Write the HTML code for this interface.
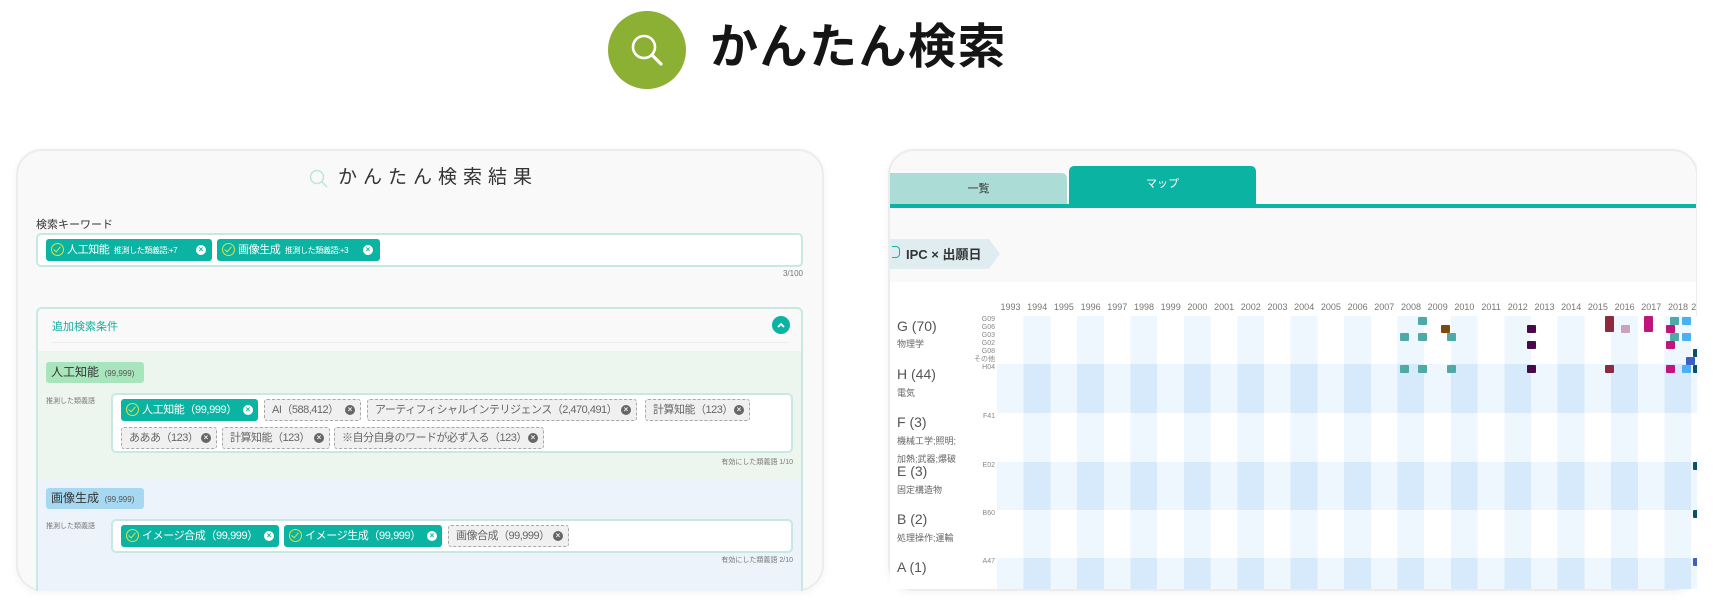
<!DOCTYPE html>
<html><head><meta charset="utf-8"><style>
*{margin:0;padding:0;box-sizing:border-box}
body{width:1715px;height:607px;background:#fff;position:relative;overflow:hidden;font-family:"Liberation Sans","Noto Sans CJK JP",sans-serif;color:#333}
.a{position:absolute}
.card{position:absolute;background:#f9f9f9;border:2px solid #ececec;border-radius:26px;overflow:hidden;box-shadow:0 2px 8px rgba(0,0,0,.05)}
.chip{position:absolute;height:22px;background:#0bb3a2;border-radius:3px;color:#fff;font-size:11px;letter-spacing:-0.4px;line-height:22px;white-space:nowrap;padding-left:21px;overflow:hidden}
.chip .ck{position:absolute;left:5px;top:4px;width:13px;height:13px;border:1.6px solid #d8e34a;border-radius:50%}
.chip .ck:after{content:"";position:absolute;left:3px;top:1px;width:3px;height:6px;border:solid #d8e34a;border-width:0 1.6px 1.6px 0;transform:rotate(40deg)}
.xw{position:absolute;top:6px;width:10px;height:10px;border-radius:50%;background:#fff;color:#0bb3a2;font-size:8px;line-height:10px;text-align:center;font-weight:bold;letter-spacing:0}
.dchip{position:absolute;height:22px;background:#f0f0f0;border:1px dashed #a8a8a8;border-radius:3px;color:#666;font-size:11px;letter-spacing:-0.5px;line-height:20px;white-space:nowrap;padding-left:7px;overflow:hidden}
.xg{position:absolute;top:5px;width:10px;height:10px;border-radius:50%;background:#666;color:#f0f0f0;font-size:8px;line-height:10px;text-align:center;font-weight:bold;letter-spacing:0}
.sm{font-size:8px;color:#777}
.yr{position:absolute;top:302px;font-size:9px;color:#777;width:27px;text-align:center}
.row{position:absolute;left:997px;width:700px}
.lt{background:repeating-linear-gradient(90deg,#fff 0 26.7px,#eef6fe 26.7px 53.4px)}
.dk{background:repeating-linear-gradient(90deg,#eef6fe 0 26.7px,#d6eafb 26.7px 53.4px)}
.sq{position:absolute;width:9px;height:8px;border-radius:1px}
.gl{position:absolute;left:897px;font-size:14px;color:#555}
.gs{position:absolute;left:897px;font-size:9px;color:#666}
.cd{position:absolute;right:720px;font-size:7px;color:#888;line-height:8px;text-align:right}
</style></head><body>

<!-- header -->
<div class="a" style="left:608px;top:11px;width:78px;height:78px;border-radius:50%;background:#8cb033"></div>
<svg class="a" style="left:626px;top:29px" width="44" height="44" viewBox="0 0 44 44"><circle cx="18" cy="18" r="11" fill="none" stroke="#fff" stroke-width="2.6"/><path d="M26 26 L35 35" stroke="#fff" stroke-width="3.2" stroke-linecap="round"/></svg>
<div class="a" style="left:710px;top:13px;font-size:48px;font-weight:bold;color:#151515;line-height:70px;letter-spacing:1.5px">かんたん検索</div>

<!-- left card -->
<div class="card" style="left:16px;top:149px;width:808px;height:442px"></div>
<svg class="a" style="left:308px;top:168px" width="22" height="22" viewBox="0 0 22 22"><circle cx="9" cy="9" r="6.5" fill="none" stroke="#bfe3dd" stroke-width="1.5"/><path d="M14 14 L19 19" stroke="#bfe3dd" stroke-width="1.5"/></svg>
<div class="a" style="left:338px;top:166px;font-size:19px;color:#333;letter-spacing:6px;line-height:24px">かんたん検索結果</div>
<div class="a" style="left:36px;top:216px;font-size:11px;color:#333">検索キーワード</div>
<div class="a" style="left:36px;top:233px;width:767px;height:34px;background:#fff;border:2px solid #c8e8e3;border-radius:5px"></div>
<div class="chip" style="left:46px;top:239px;width:166px"><span class="ck"></span>人工知能 <span style="font-size:8px">&nbsp;推測した類義語:+7</span><span class="xw" style="left:150px">×</span></div>
<div class="chip" style="left:217px;top:239px;width:163px"><span class="ck"></span>画像生成 <span style="font-size:8px">&nbsp;推測した類義語:+3</span><span class="xw" style="left:146px">×</span></div>
<div class="a sm" style="left:760px;top:269px;width:43px;text-align:right">3/100</div>

<div class="a" style="left:36px;top:307px;width:767px;height:284px;border:2px solid #c8e8e3;border-bottom:none;border-radius:6px 6px 0 0;background:#f9f9f9;overflow:hidden">
  <div class="a" style="left:14px;top:9px;font-size:11px;color:#19ad9e">追加検索条件</div>
  <div class="a" style="left:734px;top:7px;width:18px;height:18px;border-radius:50%;background:#0bb3a2"></div>
  <svg class="a" style="left:738px;top:11px" width="10" height="10" viewBox="0 0 10 10"><path d="M2 7 L5 4 L8 7" fill="none" stroke="#fff" stroke-width="1.8"/></svg>
  <div class="a" style="left:14px;top:33px;width:737px;height:1px;background:#eee"></div>
  <div class="a" style="left:0;top:42px;width:767px;height:128px;background:#edf6ee"></div>
  <div class="a" style="left:0;top:170px;width:767px;height:140px;background:#ecf3fa"></div>
</div>
<!-- section 1 -->
<div class="a" style="left:46px;top:362px;width:98px;height:21px;background:#a8e5bc;border-radius:3px;font-size:12px;line-height:21px;padding-left:5px;color:#333">人工知能 <span style="font-size:8px;color:#555">&nbsp;(99,999)</span></div>
<div class="a sm" style="left:46px;top:396px;font-size:7px">推測した類義語</div>
<div class="a" style="left:111px;top:393px;width:682px;height:60px;background:#fff;border:2px solid #c8e8e3;border-radius:5px"></div>
<div class="chip" style="left:121px;top:399px;width:137px"><span class="ck"></span>人工知能（99,999）<span class="xw" style="left:122px">×</span></div>
<div class="dchip" style="left:264px;top:399px;width:97px">AI（588,412）<span class="xg" style="left:80px">×</span></div>
<div class="dchip" style="left:367px;top:399px;width:270px">アーティフィシャルインテリジェンス（2,470,491）<span class="xg" style="left:253px">×</span></div>
<div class="dchip" style="left:645px;top:399px;width:105px">計算知能（123）<span class="xg" style="left:88px">×</span></div>
<div class="dchip" style="left:121px;top:427px;width:96px">あああ（123）<span class="xg" style="left:79px">×</span></div>
<div class="dchip" style="left:222px;top:427px;width:108px">計算知能（123）<span class="xg" style="left:91px">×</span></div>
<div class="dchip" style="left:334px;top:427px;width:210px">※自分自身のワードが必ず入る（123）<span class="xg" style="left:193px">×</span></div>
<div class="a sm" style="left:600px;top:457px;width:193px;text-align:right;font-size:7px">有効にした類義語 1/10</div>
<!-- section 2 -->
<div class="a" style="left:46px;top:488px;width:98px;height:21px;background:#a6d8f2;border-radius:3px;font-size:12px;line-height:21px;padding-left:5px;color:#333">画像生成 <span style="font-size:8px;color:#555">&nbsp;(99,999)</span></div>
<div class="a sm" style="left:46px;top:521px;font-size:7px">推測した類義語</div>
<div class="a" style="left:111px;top:519px;width:682px;height:34px;background:#fff;border:2px solid #c8e8e3;border-radius:5px"></div>
<div class="chip" style="left:121px;top:525px;width:158px"><span class="ck"></span>イメージ合成（99,999）<span class="xw" style="left:143px">×</span></div>
<div class="chip" style="left:284px;top:525px;width:158px"><span class="ck"></span>イメージ生成（99,999）<span class="xw" style="left:143px">×</span></div>
<div class="dchip" style="left:448px;top:525px;width:121px">画像合成（99,999）<span class="xg" style="left:104px">×</span></div>
<div class="a sm" style="left:600px;top:555px;width:193px;text-align:right;font-size:7px">有効にした類義語 2/10</div>

<!-- right card -->
<div class="card" style="left:888px;top:149px;width:810px;height:442px"></div>
<div class="a" style="left:890px;top:173px;width:177px;height:32px;background:#acdcd6;border-radius:0 5px 0 0;font-size:11px;text-align:center;line-height:32px;color:#333">一覧</div>
<div class="a" style="left:1069px;top:166px;width:187px;height:39px;background:#0bb3a2;border-radius:5px 5px 0 0;font-size:11px;text-align:center;line-height:36px;color:#fff">マップ</div>
<div class="a" style="left:890px;top:204px;width:806px;height:4px;background:#0bb3a2"></div>
<div class="a" style="left:890px;top:239px;width:110px;height:30px;background:#dfedf0;clip-path:polygon(0 0,90% 0,100% 50%,90% 100%,0 100%)"></div>
<div class="a" style="left:892px;top:246px;width:8px;height:12px;border:1.5px solid #19ad9e;border-radius:0 4px 4px 0;border-left:none"></div>
<div class="a" style="left:906px;top:244px;font-size:13px;font-weight:bold;color:#333">IPC × 出願日</div>
<div class="a" style="left:890px;top:282px;width:806px;height:307px;background:#fff"></div>

<!-- rows -->
<div class="row lt" style="top:316px;height:48px"></div>
<div class="row dk" style="top:364px;height:49px"></div>
<div class="row lt" style="top:413px;height:49px"></div>
<div class="row dk" style="top:462px;height:48px"></div>
<div class="row lt" style="top:510px;height:48px"></div>
<div class="row dk" style="top:558px;height:31px"></div>

<div class="yr" style="left:997px">1993</div><div class="yr" style="left:1023.7px">1994</div><div class="yr" style="left:1050.4px">1995</div><div class="yr" style="left:1077.1px">1996</div><div class="yr" style="left:1103.8px">1997</div><div class="yr" style="left:1130.5px">1998</div><div class="yr" style="left:1157.2px">1999</div><div class="yr" style="left:1183.9px">2000</div><div class="yr" style="left:1210.6px">2001</div><div class="yr" style="left:1237.3px">2002</div><div class="yr" style="left:1264px">2003</div><div class="yr" style="left:1290.7px">2004</div><div class="yr" style="left:1317.4px">2005</div><div class="yr" style="left:1344.1px">2006</div><div class="yr" style="left:1370.8px">2007</div><div class="yr" style="left:1397.5px">2008</div><div class="yr" style="left:1424.2px">2009</div><div class="yr" style="left:1450.9px">2010</div><div class="yr" style="left:1477.6px">2011</div><div class="yr" style="left:1504.3px">2012</div><div class="yr" style="left:1531px">2013</div><div class="yr" style="left:1557.7px">2014</div><div class="yr" style="left:1584.4px">2015</div><div class="yr" style="left:1611.1px">2016</div><div class="yr" style="left:1637.8px">2017</div><div class="yr" style="left:1664.5px">2018</div><div class="yr" style="left:1691.2px;text-align:left">2</div>

<div class="gl" style="top:318px">G (70)</div><div class="gs" style="top:337px">物理学</div>
<div class="gl" style="top:366px">H (44)</div><div class="gs" style="top:386px">電気</div>
<div class="gl" style="top:414px">F (3)</div><div class="gs" style="top:434px">機械工学;照明;</div><div class="gs" style="top:452px">加熱;武器;爆破</div>
<div class="gl" style="top:463px">E (3)</div><div class="gs" style="top:483px">固定構造物</div>
<div class="gl" style="top:511px">B (2)</div><div class="gs" style="top:531px">処理操作;運輸</div>
<div class="gl" style="top:559px">A (1)</div>
<div class="cd" style="top:316px">G09<br>G06<br>G03<br>G02<br>G08<br>その他<br>H04</div>
<div class="cd" style="top:413px">F41</div><div class="cd" style="top:462px">E02</div><div class="cd" style="top:510px">B60</div><div class="cd" style="top:558px">A47</div>

<!-- squares -->
<div class="sq" style="left:1418px;top:317px;background:#4fa9a6"></div>
<div class="sq" style="left:1400px;top:333px;background:#4fa9a6"></div>
<div class="sq" style="left:1418px;top:333px;background:#4fa9a6"></div>
<div class="sq" style="left:1441px;top:325px;background:#7a4a10"></div>
<div class="sq" style="left:1447px;top:333px;background:#4fa9a6"></div>
<div class="sq" style="left:1400px;top:365px;background:#4fa9a6"></div>
<div class="sq" style="left:1418px;top:365px;background:#4fa9a6"></div>
<div class="sq" style="left:1447px;top:365px;background:#4fa9a6"></div>
<div class="sq" style="left:1527px;top:325px;background:#4a0a4a"></div>
<div class="sq" style="left:1527px;top:341px;background:#4a0a4a"></div>
<div class="sq" style="left:1527px;top:365px;background:#4a0a4a"></div>
<div class="sq" style="left:1605px;top:316px;height:16px;background:#8e2a3e"></div>
<div class="sq" style="left:1605px;top:365px;background:#8e2a3e"></div>
<div class="sq" style="left:1621px;top:325px;background:#c9a2c2"></div>
<div class="sq" style="left:1644px;top:316px;height:16px;background:#c0157a"></div>
<div class="sq" style="left:1670px;top:317px;background:#4fa9a6"></div>
<div class="sq" style="left:1670px;top:333px;background:#4fa9a6"></div>
<div class="sq" style="left:1666px;top:325px;background:#c0157a"></div>
<div class="sq" style="left:1666px;top:341px;background:#c0157a"></div>
<div class="sq" style="left:1666px;top:365px;background:#c0157a"></div>
<div class="sq" style="left:1682px;top:317px;background:#4ab0f0"></div>
<div class="sq" style="left:1682px;top:333px;background:#4ab0f0"></div>
<div class="sq" style="left:1682px;top:365px;background:#4ab0f0"></div>
<div class="sq" style="left:1686px;top:357px;background:#3a5fc8"></div>
<div class="sq" style="left:1693px;top:349px;background:#0a5070"></div>
<div class="sq" style="left:1693px;top:365px;background:#0a5070"></div>
<div class="sq" style="left:1693px;top:462px;background:#0a5070"></div>
<div class="sq" style="left:1693px;top:510px;background:#0a5070"></div>
<div class="sq" style="left:1693px;top:558px;background:#3a5fc8"></div>
<div class="a" style="left:1697px;top:150px;width:18px;height:457px;background:#fff"></div>
</body></html>
